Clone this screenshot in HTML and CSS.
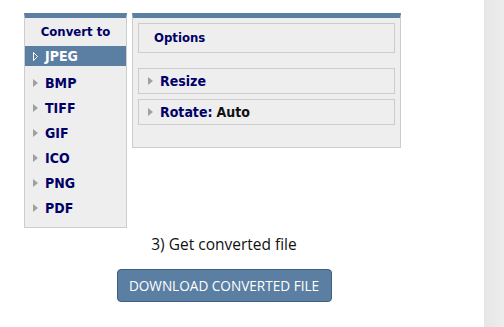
FILE: index.html
```html
<!DOCTYPE html>
<html>
<head>
    <title>Convert file</title>
    <link rel="stylesheet" href="styles.css">
</head>
<body>
    <div class="page">
        <div class="main">
            <div class="panels">
                <div class="formats">
                    <div class="formats-title">Convert to</div>
                    <ul class="format-list">
                        <li class="format selected">
                            <svg class="open-arrow" width="5" height="9" viewBox="0 0 5 9"><path d="M0.5 0.5 L4.5 4.5 L0.5 8.5 Z" fill="none" stroke="#fff" stroke-width="1"/></svg>JPEG
                        </li>
                        <li class="format"><span class="arrow"></span>BMP</li>
                        <li class="format"><span class="arrow"></span>TIFF</li>
                        <li class="format"><span class="arrow"></span>GIF</li>
                        <li class="format"><span class="arrow"></span>ICO</li>
                        <li class="format"><span class="arrow"></span>PNG</li>
                        <li class="format"><span class="arrow"></span>PDF</li>
                    </ul>
                </div>
                <div class="options">
                    <div class="options-title">Options</div>
                    <div class="option"><span class="arrow"></span>Resize</div>
                    <div class="option"><span class="arrow"></span>Rotate: <span class="value">Auto</span></div>
                </div>
            </div>
            <div class="step">
                <p class="step-title">3) Get converted file</p>
                <button class="download" type="button">DOWNLOAD CONVERTED FILE</button>
            </div>
        </div>
        <div class="side"></div>
    </div>
</body>
</html>
```

FILE: styles.css
```css
body {
    margin: 0;
    background-color: #fff;
    font-family: "DejaVu Sans", sans-serif;
}

.page {
    display: flex;
    height: 327px;
    overflow: hidden;
}

.main {
    flex: 1;
}

.side {
    width: 20px;
    background: linear-gradient(to right, #e6e6e6, #ededed);
}

.panels {
    display: flex;
    align-items: flex-start;
    padding: 13px 0 0 24px;
}

.formats {
    width: 101px;
    height: 209px;
    background-color: #eeeeee;
    border: 1px solid #cccccc;
    border-top: 5px solid #5b7fa2;
}

.formats-title {
    height: 28px;
    line-height: 28px;
    text-align: center;
    font-size: 13px;
    font-weight: bold;
    font-stretch: condensed;
    color: #000066;
}

.format-list {
    list-style: none;
    margin: 0;
    padding: 0;
}

.format {
    display: flex;
    align-items: center;
    height: 25px;
    padding-left: 8px;
    font-size: 14px;
    font-weight: bold;
    font-stretch: condensed;
    color: #000066;
}

.format.selected {
    height: 20px;
    margin-bottom: 4px;
    background-color: #5b7fa2;
    color: #fff;
}

.arrow {
    width: 0;
    height: 0;
    margin-right: 7px;
    border-top: 4px solid transparent;
    border-bottom: 4px solid transparent;
    border-left: 5px solid #a0a0a0;
}

.open-arrow {
    margin-right: 7px;
}

.options {
    width: 257px;
    height: 124px;
    margin-left: 5px;
    padding: 5px 5px 0;
    background-color: #eeeeee;
    border: 1px solid #cccccc;
    border-top: 5px solid #5b7fa2;
}

.options-title {
    height: 28px;
    line-height: 28px;
    padding-left: 15px;
    margin-bottom: 15px;
    border: 1px solid #cccccc;
    font-size: 13px;
    font-weight: bold;
    font-stretch: condensed;
    color: #000066;
}

.option {
    display: flex;
    align-items: center;
    height: 24px;
    padding-left: 9px;
    margin-bottom: 5px;
    border: 1px solid #cccccc;
    font-size: 14px;
    font-weight: bold;
    font-stretch: condensed;
    color: #000066;
}

.option .value {
    margin-left: 4px;
    color: #111;
}

.step {
    width: 448px;
    text-align: center;
}

.step-title {
    margin: 5px 0 14px;
    font-family: "Open Sans", sans-serif;
    font-size: 15.5px;
    color: #111;
}

.download {
    width: 215px;
    height: 33px;
    background-color: #5b7fa2;
    border: 1px solid #3f5f80;
    border-radius: 4px;
    color: #fff;
    font-family: "Open Sans", sans-serif;
    font-size: 13.6px;
    cursor: pointer;
}
```
